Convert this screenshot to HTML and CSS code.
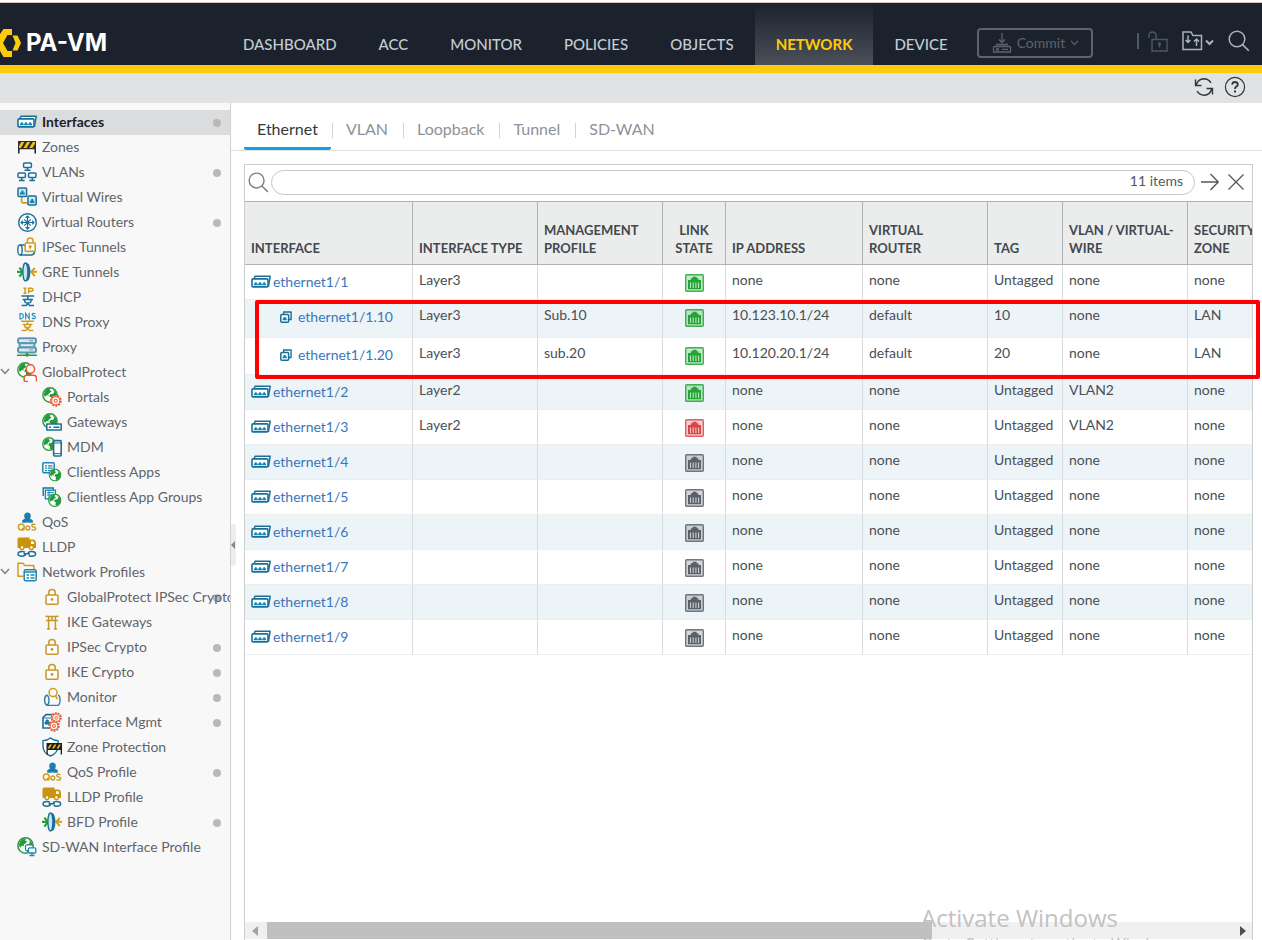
FILE: index.html
```html
<!DOCTYPE html>
<html lang="en">
<head>
<meta charset="utf-8">
<title>PA-VM</title>
<link rel="stylesheet" href="styles.css">
</head>
<body>
<svg class="sprite" aria-hidden="true">
  <symbol id="i-port" viewBox="0 0 20 20"><path d="M3 7.200L4 4.200h15.200l-1.800 10.600" fill="#fff" stroke="#1b6f96" stroke-width="1.500" stroke-linejoin="round"/><rect x="1" y="6.900" width="16" height="8" rx="1" fill="#fff" stroke="#1b6f96" stroke-width="1.600"/><path d="M2.900 13.300v-1.800h1v-1.300h1.800v1.300h1v1.800zM7.100 13.300v-1.800h1v-1.300h1.800v1.300h1v1.800zM11.300 13.300v-1.800h1v-1.300h1.800v1.300h1v1.800z" fill="#0a84b8"/></symbol>
  <symbol id="i-zone" viewBox="0 0 20 20"><path d="M1 4h18v12.5h-1.6v-4.3H2.6v4.3H1z" fill="#2b2b2b"/><path d="M4.200 5h3.200L4 11H2V8.800zM10 5h3.200L9.600 11H6.400zM15.800 5H18v1.800L15.400 11h-3.200z" fill="#f0be14"/></symbol>
  <symbol id="i-vlan" viewBox="0 0 20 20"><g fill="#fff" stroke="#1b6f96" stroke-width="1.5"><rect x="6.600" y="1" width="7.800" height="4.400" rx="1"/><rect x="1" y="11" width="7.400" height="4.400" rx="1"/><rect x="11.600" y="11" width="7.400" height="4.400" rx="1"/><path d="M10.500 5.400v3M7.500 8.200h6M4.700 15.400v3M2 18.600h5.600M15.300 15.400v3M12.400 18.600H18"/></g></symbol>
  <symbol id="i-wire" viewBox="0 0 20 20"><path d="M4.600 10v4.400q0 1.400 1.600 1.400H11" fill="none" stroke="#d39c1e" stroke-width="1.7"/><rect x="1" y="1" width="8.600" height="8.600" rx="1" fill="#cfe6f0" stroke="#1b6f96" stroke-width="1.5"/><rect x="11" y="9" width="8.200" height="9" rx="1" fill="#cfe6f0" stroke="#1b6f96" stroke-width="1.5"/><path d="M3 7.600V5.400h1.400V3.600h2v1.800h1.400v2.200zM13 16v-2.200h1.200V12h2v1.800h1.200V16z" fill="#0a84b8"/></symbol>
  <symbol id="i-router" viewBox="0 0 20 20"><circle cx="10.500" cy="10.500" r="8.800" fill="#fff" stroke="#1b6f96" stroke-width="1.4"/><g stroke="#1b6f96" stroke-width="1.200" fill="none"><path d="M10.500 4v13M4 10.500h13M8.600 5.800l1.900-1.800 1.900 1.800M8.600 15.200l1.900 1.800 1.900-1.800M5.800 8.600L4 10.500l1.800 1.900M15.200 8.600l1.800 1.900-1.800 1.900M7.200 7.400l6.600 6.200M13.800 7.400l-6.600 6.200"/></g></symbol>
  <symbol id="i-ipsec" viewBox="0 0 20 20"><g fill="none" stroke="#1b6f96" stroke-width="1.400"><ellipse cx="3" cy="13" rx="2.200" ry="5"/><path d="M3 8h6M3 18h11.400q2.600 0 3.200-3"/></g><rect x="8.200" y="6" width="10" height="8.400" rx="1" fill="#fff" stroke="#d39c1e" stroke-width="1.600"/><path d="M10.400 6V3.600q0-2.600 2.800-2.600T16 3.600V6" fill="none" stroke="#d39c1e" stroke-width="1.500"/><circle cx="13.200" cy="9.400" r="1.500" fill="#d39c1e"/><path d="M13.200 9.600v3" stroke="#d39c1e" stroke-width="1.200"/></symbol>
  <symbol id="i-gre" viewBox="0 0 20 20"><path d="M0 9.800h5.600M2.400 5.600L6 9.800l-3.600 4.800" fill="none" stroke="#23a03a" stroke-width="2.200"/><path d="M20 9.800h-5M17.800 5.800l-3.600 4 3.600 4.400" fill="none" stroke="#d39c1e" stroke-width="1.900"/><path d="M8.600 1h1.800q3 2 3 9t-3 9H8.600z" fill="#1b6f96"/><ellipse cx="8.400" cy="10" rx="2.500" ry="9" fill="#c8e3ef" stroke="#1b6f96" stroke-width="1.300"/></symbol>
  <symbol id="i-dhcp" viewBox="0 0 20 20"><path d="M8 .6v6M11.600 6.600V1.200h3q1.400.3 1.400 1.500t-1.500 1.500h-3M6.500 1.200h3M6.500 6.300h3" fill="none" stroke="#d39c1e" stroke-width="1.500"/><path d="M4.400 9h12.800M10.800 9v3M5.600 12.500h10.400M7.600 13q-.4 3 3.200 3t3.200-3M4.600 18.600h4.400l1.800-2 1.800 2H17" fill="none" stroke="#1b6f96" stroke-width="1.500"/></symbol>
  <symbol id="i-dns" viewBox="0 0 20 20"><path d="M3 1.600v5.200h1.400q2-.4 2-2.600t-2-2.600zM8.600 7.400v-6l3.600 5.400v-6M18.400 2q-3-1.400-3.200.4 0 1.200 1.600 1.500 1.800.4 1.600 1.700-.6 1.800-3.600.5" fill="none" stroke="#2a93bf" stroke-width="1.200"/><path d="M4 9.200h13M10.500 9.200v3M5.600 12.400h9.800M7.600 13q-.2 2.800 2.900 2.800t2.900-2.800M4.600 18.600h4l1.900-2 1.900 2h4" fill="none" stroke="#d39c1e" stroke-width="1.500"/></symbol>
  <symbol id="i-proxy" viewBox="0 0 20 20"><g fill="#dceaf0" stroke="#5d97b3" stroke-width="2"><rect x="1" y="1.200" width="18" height="5" rx="2"/><rect x="2.600" y="6.200" width="14.800" height="4.200"/><rect x="1" y="10.400" width="18" height="5" rx="2"/></g><path d="M12 3.700h4M12 12.900h4" stroke="#7db594" stroke-width="1.200"/><path d="M0 18.300h20M10 15.600v3" stroke="#23a03a" stroke-width="1.400"/><circle cx="10" cy="18" r="1.800" fill="#23a03a"/></symbol>
  <symbol id="i-globe" viewBox="0 0 16 16"><circle cx="8" cy="8" r="7.200" fill="#fff" stroke="#249a3a" stroke-width="1.400"/><path d="M3 4q2-3 5.500-2.600l-.8 2.200 2 .4-1.600 1.800-1.800 1.200.4 1.800-2-.8L3 10 1.600 7.500zM10.500 2l3 2.400L15 8l-1.500 4.200-3 2.300-1.700-1 .4-3-2-1 1-2.300 3-.5 1-2z" fill="#249a3a"/></symbol>
  <symbol id="i-gp" viewBox="0 0 20 20"><use href="#i-globe" x="0" y="0" width="16" height="16"/><circle cx="13.400" cy="7" r="4.200" fill="#f7f7f7" stroke="#ea5b33" stroke-width="1.500"/><path d="M7.200 19.600v-4q0-2.400 2.600-2.400h6.800q2.800 0 2.800 2.600v3.800M7 19.400h4" fill="#fff" stroke="#ea5b33" stroke-width="1.500"/></symbol>
  <symbol id="i-gear" viewBox="0 0 12 12"><circle cx="6" cy="6" r="4.900" fill="#fff" stroke="#ea5b33" stroke-width="1.800" stroke-dasharray="2 1"/><circle cx="6" cy="6" r="3.900" fill="#fff" stroke="#ea5b33"/><circle cx="6" cy="6" r="1.500" fill="none" stroke="#ea5b33"/></symbol>
  <symbol id="i-portal" viewBox="0 0 20 20"><use href="#i-globe" x="0" y="0" width="16" height="16"/><use href="#i-gear" x="7.500" y="7.500" width="12.500" height="12.500"/></symbol>
  <symbol id="i-gateway" viewBox="0 0 20 20"><use href="#i-globe" x="0" y="1" width="16" height="16"/><path d="M4.800 12h14.400v6H4.800z" fill="#fff" stroke="#1b6f96" stroke-width="1.500" stroke-linejoin="round"/><path d="M7 15.200h2M11.500 15.200h6" stroke="#1b6f96" stroke-width="1.400"/></symbol>
  <symbol id="i-mdm" viewBox="0 0 20 20"><use href="#i-globe" x="0" y="0" width="14" height="14"/><rect x="11.600" y="3.600" width="7.600" height="15.400" rx="1.200" fill="#fff" stroke="#1b6f96" stroke-width="1.600"/><path d="M12 6h7M12 16.600h7" stroke="#1b6f96"/></symbol>
  <symbol id="i-app" viewBox="0 0 20 20"><rect x=".8" y=".8" width="11.400" height="10" rx="1" fill="#fff" stroke="#1f86b3" stroke-width="1.500"/><path d="M3 3.800h2M6 3.800h4.500M3 6.200h2M6 6.200h4.500M3 8.600h2M6 8.600h4.500" stroke="#1f86b3" stroke-width="1.200"/><use href="#i-globe" x="6.500" y="6.500" width="13" height="13"/></symbol>
  <symbol id="i-apps" viewBox="0 0 20 20"><path d="M1.200 9V1h10v3" fill="#fff" stroke="#1b6f96" stroke-width="1.400"/><rect x="3.400" y="3.200" width="10" height="8.600" fill="#fff" stroke="#1f86b3" stroke-width="1.400"/><path d="M5 5.600h7M5 8h7M7 3v8" stroke="#1f86b3"/><use href="#i-globe" x="6" y="6.500" width="13.500" height="13.500"/></symbol>
  <symbol id="i-qos" viewBox="0 0 20 20"><path d="M7.200 4q0-3.600 3.300-3.600T13.800 4q0 1.600-.8 2.600l2.800 1.600v2.600h-4V9.200h-2.600v1.600h-4V8.200L8 6.600Q7.200 5.600 7.200 4z" fill="#1a7fb2"/><path d="M10.500 7l1.600 3.600H8.900z" fill="#1b6f96"/><g fill="none" stroke="#d39c1e" stroke-width="1.500"><ellipse cx="4.300" cy="15" rx="2.900" ry="3"/><path d="M5 16l2.200 2.600"/><circle cx="10.800" cy="16" r="1.900"/><path d="M18.600 12.600q-3.600-1.200-3.800.8 0 1.200 1.800 1.700 2.200.5 2 1.800-.6 1.800-4.200.7"/></g></symbol>
  <symbol id="i-lldp" viewBox="0 0 20 20"><path d="M.5 2Q.5.500 2 .500h10.500V2.500h4q2 .2 2.500 3v5.500H.5z" fill="#c9920f"/><path d="M14 4.200h2.300l1 2.800H14z" fill="#fff"/><g fill="#fff" stroke="#c9920f" stroke-width="1.300"><circle cx="5" cy="10.500" r="2"/><circle cx="14.400" cy="10.500" r="2"/></g><path d="M8 15.400q-1-1-3-1-4 0-4 2.400t4 2.400q3 0 3.600-1.600M11.600 18.200q1 1 3 1 4 0 4-2.400t-4-2.400q-3 0-3.600 1.600M6.500 16.800h6.500" fill="none" stroke="#1b6f96" stroke-width="1.500"/></symbol>
  <symbol id="i-netprof" viewBox="0 0 20 20"><path d="M6.500 14.300H1V1.200h5l1.800 2.300h9V7" fill="none" stroke="#d39c1e" stroke-width="1.500" stroke-linejoin="round"/><rect x="7.200" y="7.800" width="12" height="11" rx="1.500" fill="#fff" stroke="#1f86b3" stroke-width="1.500"/><path d="M7 10h12.500" stroke="#1f86b3" stroke-width="1.500"/><path d="M9.500 13h2.500M13.500 13h4M9.500 16h2.500M13.500 16h4" stroke="#1f86b3" stroke-width="1.300"/></symbol>
  <symbol id="i-lock" viewBox="0 0 20 20"><rect x="4" y="8" width="12" height="9.200" rx="1" fill="#fff" stroke="#c9962a" stroke-width="1.500"/><path d="M6.800 8V5.500Q6.800 2.600 10 2.600t3.200 2.900V8" fill="none" stroke="#c9962a" stroke-width="1.500"/><circle cx="10" cy="12.400" r="1.400" fill="#c9962a"/></symbol>
  <symbol id="i-ike" viewBox="0 0 20 20"><path d="M3.500 4.200q6.500.8 13 0M4 8.600h12M6.600 4.500V17M13.400 4.500V17M10 4.500v4M5 17h3M12 17h3" fill="none" stroke="#c9962a" stroke-width="1.500"/></symbol>
  <symbol id="i-monitor" viewBox="0 0 20 20"><g fill="none" stroke="#3481a3" stroke-width="1.400"><path d="M5 8q-2.400 1-2.400 5T5 18.400h11q2-1 2-5.400T16 8.200M5 8q2 1.400 2 5.400t-2 5"/></g><circle cx="11" cy="5.600" r="4" fill="#fff" stroke="#d39c1e" stroke-width="1.500"/><path d="M13.500 9l2 3" stroke="#d39c1e" stroke-width="1.500"/></symbol>
  <symbol id="i-mgmt" viewBox="0 0 20 20"><path d="M1 16V5.500L4 2.600h11V16z" fill="#fff" stroke="#1b6f96" stroke-width="1.600"/><path d="M1 6h11M3 12v-2h1.200V8h2v2h1.200v2z" fill="#0a84b8" stroke="#1b6f96"/><use href="#i-gear" x="8.500" y="0" width="11.500" height="11.500"/><use href="#i-gear" x="6" y="8" width="12" height="12"/></symbol>
  <symbol id="i-zprot" viewBox="0 0 20 20"><path d="M8.500 1q3 2.500 7.500 2.600V9q0 7-7.500 10Q1 16 1 9V3.600Q5.500 3.500 8.500 1z" fill="#fff" stroke="#1b6f96" stroke-width="1.400"/><path d="M4.500 6H20v11.500h-1.300V13H5.800v4.500H4.500z" fill="#1c1c1c"/><path d="M8 7.500h2L7.500 11.500h-2zM12.500 7.500h2L12 11.500h-2zM17 7.500h1.800L16.500 11.500h-2z" fill="#f0be14"/></symbol>
  <symbol id="i-sdwan" viewBox="0 0 20 20"><use href="#i-globe" x="0" y="0" width="17" height="17"/><rect x="8.500" y="8" width="7.500" height="5.500" rx="1" fill="#fff" stroke="#1f86b3" stroke-width="1.200"/><rect x="11.500" y="10.800" width="7.300" height="5.200" rx="1" fill="#fff" stroke="#1f86b3" stroke-width="1.300"/><path d="M15 16v2.500M12.500 18.500h5" stroke="#1f86b3" stroke-width="1.300"/></symbol>
  <symbol id="i-sub" viewBox="0 0 12 12"><path d="M3.600 3V1h7.500v7.500H9" fill="none" stroke="#1b6f96" stroke-width="1.400" stroke-linejoin="round"/><rect x=".8" y="3.400" width="7.800" height="7.800" rx="1" fill="#fff" stroke="#1b6f96" stroke-width="1.500"/><path d="M2.600 9.300V7.500h1V6h2.200v1.500h1v1.800z" fill="#0a84b8"/></symbol>
  <symbol id="i-link" viewBox="0 0 19 18"><rect x=".7" y=".7" width="17.600" height="16.600" rx="1" fill="currentColor" fill-opacity=".25" stroke="currentColor" stroke-opacity=".85" stroke-width="1.400"/><path d="M3 15.300V6h2.800V4.300h1.800V2.800h4v1.500h1.800V6H16v9.300z" fill="currentColor"/><path d="M5.500 8.500v5.500M8.200 8.500v5.500M10.900 8.500v5.500M13.600 8.500v5.500" stroke="#fff" stroke-opacity=".7" stroke-width="1.100"/></symbol>
  <symbol id="i-search" viewBox="0 0 22 22"><circle cx="9" cy="9" r="7.800" fill="none" stroke="currentColor" stroke-width="1.500"/><path d="M14.600 14.600l6.200 6.200" stroke="currentColor" stroke-width="1.600"/></symbol>
  <symbol id="i-chev" viewBox="0 0 10 7"><path d="M1 1l4 4.500L9 1" fill="none" stroke="currentColor" stroke-width="1.400"/></symbol>
</svg>

<header class="top">
  <div class="brand">
    <svg class="brand-mark" viewBox="0 0 21 28" aria-hidden="true"><path d="M0 5L3.500 0H12v6H7.500L3 14l4.500 8H12v6H3.500L0 22z" fill="#fecb0a"/><path d="M12.500 6.500h5L21 14l-3.500 7.500h-5l3-7.500z" fill="#fecb0a"/></svg>
    <span>PA-VM</span>
  </div>
  <nav class="menu" aria-label="Main">
    <a href="#">DASHBOARD</a><a href="#">ACC</a><a href="#">MONITOR</a><a href="#">POLICIES</a><a href="#">OBJECTS</a><a href="#" class="current">NETWORK</a><a href="#">DEVICE</a>
  </nav>
  <button class="commit" type="button" disabled>
    <svg width="20" height="21" viewBox="0 0 20 21" fill="none" stroke="currentColor" stroke-width="1.300" aria-hidden="true"><path d="M10 0v9M7 6.500L10 9.500l3-3M1.500 14.500q0-1 1-1h15q1 0 1 1V19H1.500zM4 11.500h12M10 16.300h6"/><circle cx="5.500" cy="16.300" r="1"/></svg>
    <span>Commit</span>
    <svg width="9" height="6" aria-hidden="true"><use href="#i-chev"/></svg>
  </button>
  <div class="tools">
    <span class="bar"></span>
    <button type="button" class="lock" aria-label="Locks"><svg width="20" height="21" viewBox="0 0 20 21" fill="none" stroke="currentColor" stroke-width="1.400"><path d="M4 8.500h15V20H4zM1 7V4q.5-3 3.500-3T8 4v4.500"/><circle cx="11.500" cy="13" r="1" fill="currentColor"/><path d="M11.500 13v3.500"/></svg></button>
    <button type="button" aria-label="Configuration"><svg width="32" height="20" viewBox="0 0 32 20" fill="none" stroke="currentColor" stroke-width="1.500"><path d="M1 18.500V1h8l2 3.500h8.500v14zM6 4.500v7M3.600 9L6 11.500 8.400 9M14.500 15V8M12 10.500L14.500 8l2.500 2.500"/><path d="M24 9.500l3.500 3.500 3.500-3.500" stroke-width="2"/></svg></button>
    <button type="button" aria-label="Search"><svg width="22" height="22"><use href="#i-search"/></svg></button>
  </div>
</header>

<div class="subbar">
  <button type="button" aria-label="Refresh"><svg width="20" height="20" viewBox="0 0 20 20" fill="none" stroke="currentColor" stroke-width="1.400"><path d="M2.200 8.500Q3.500 2 10 1.800q4.500.2 7 4M1.500 2.500v6h6M17.800 11Q16.500 18 10 18.200q-4.500-.2-7-4M18.500 17.500v-6h-6"/></svg></button>
  <button type="button" aria-label="Help"><svg width="22" height="22" viewBox="0 0 22 22" fill="none" stroke="currentColor"><circle cx="11" cy="11" r="9.600" stroke-width="1.200"/><path d="M8.200 8.600Q8.400 6 11 6t2.800 2.400q0 1.400-1.500 2.200Q11 11.400 11 13" stroke-width="1.800"/><path d="M11 14.500v2" stroke-width="2"/></svg></button>
</div>

<div class="layout">
  <nav class="side" aria-label="Network">
    <ul>
      <li class="on dot"><svg><use href="#i-port"/></svg><a href="#">Interfaces</a></li>
      <li><svg><use href="#i-zone"/></svg><a href="#">Zones</a></li>
      <li class="dot"><svg><use href="#i-vlan"/></svg><a href="#">VLANs</a></li>
      <li><svg><use href="#i-wire"/></svg><a href="#">Virtual Wires</a></li>
      <li class="dot"><svg><use href="#i-router"/></svg><a href="#">Virtual Routers</a></li>
      <li><svg><use href="#i-ipsec"/></svg><a href="#">IPSec Tunnels</a></li>
      <li><svg><use href="#i-gre"/></svg><a href="#">GRE Tunnels</a></li>
      <li><svg><use href="#i-dhcp"/></svg><a href="#">DHCP</a></li>
      <li><svg><use href="#i-dns"/></svg><a href="#">DNS Proxy</a></li>
      <li><svg><use href="#i-proxy"/></svg><a href="#">Proxy</a></li>
      <li class="parent"><button type="button" aria-label="Collapse GlobalProtect"><svg class="chev"><use href="#i-chev"/></svg></button><svg><use href="#i-gp"/></svg><a href="#">GlobalProtect</a></li>
      <li class="child"><svg><use href="#i-portal"/></svg><a href="#">Portals</a></li>
      <li class="child"><svg><use href="#i-gateway"/></svg><a href="#">Gateways</a></li>
      <li class="child"><svg><use href="#i-mdm"/></svg><a href="#">MDM</a></li>
      <li class="child"><svg><use href="#i-app"/></svg><a href="#">Clientless Apps</a></li>
      <li class="child"><svg><use href="#i-apps"/></svg><a href="#">Clientless App Groups</a></li>
      <li><svg><use href="#i-qos"/></svg><a href="#">QoS</a></li>
      <li><svg><use href="#i-lldp"/></svg><a href="#">LLDP</a></li>
      <li class="parent"><button type="button" aria-label="Collapse Network Profiles"><svg class="chev"><use href="#i-chev"/></svg></button><svg><use href="#i-netprof"/></svg><a href="#">Network Profiles</a></li>
      <li class="child dot"><svg><use href="#i-lock"/></svg><a href="#">GlobalProtect IPSec Crypto</a></li>
      <li class="child"><svg><use href="#i-ike"/></svg><a href="#">IKE Gateways</a></li>
      <li class="child dot"><svg><use href="#i-lock"/></svg><a href="#">IPSec Crypto</a></li>
      <li class="child dot"><svg><use href="#i-lock"/></svg><a href="#">IKE Crypto</a></li>
      <li class="child dot"><svg><use href="#i-monitor"/></svg><a href="#">Monitor</a></li>
      <li class="child dot"><svg><use href="#i-mgmt"/></svg><a href="#">Interface Mgmt</a></li>
      <li class="child"><svg><use href="#i-zprot"/></svg><a href="#">Zone Protection</a></li>
      <li class="child dot"><svg><use href="#i-qos"/></svg><a href="#">QoS Profile</a></li>
      <li class="child"><svg><use href="#i-lldp"/></svg><a href="#">LLDP Profile</a></li>
      <li class="child dot"><svg><use href="#i-gre"/></svg><a href="#">BFD Profile</a></li>
      <li><svg><use href="#i-sdwan"/></svg><a href="#">SD-WAN Interface Profile</a></li>
    </ul>
  </nav>

  <main class="main">
    <button class="collapse" type="button" aria-label="Collapse sidebar"></button>
    <nav class="tabs" aria-label="Interface kinds">
      <a href="#" class="active">Ethernet</a><a href="#">VLAN</a><a href="#">Loopback</a><a href="#">Tunnel</a><a href="#">SD-WAN</a>
    </nav>

    <div class="panel">
      <form class="filter">
        <svg class="glass" aria-hidden="true"><use href="#i-search"/></svg>
        <div class="field"><input type="text" aria-label="Filter interfaces"><span>11 items</span></div>
        <button type="button" aria-label="Apply filter"><svg width="18" height="18" viewBox="0 0 18 18" fill="none" stroke="currentColor" stroke-width="1.400"><path d="M0 9h17M9.500 1l7.700 8-7.700 8"/></svg></button>
        <button type="button" aria-label="Clear filter"><svg width="16" height="16" viewBox="0 0 16 16" stroke="currentColor" stroke-width="1.300"><path d="M.5.500l15 15M15.500.500l-15 15"/></svg></button>
      </form>
      <div class="scroll">
        <table>
          <colgroup><col class="c-if"><col class="c-md"><col class="c-md"><col class="c-ln"><col class="c-ip"><col class="c-md"><col class="c-tg"><col class="c-md"><col class="c-md"></colgroup>
          <thead><tr><th>INTERFACE</th><th>INTERFACE TYPE</th><th>MANAGEMENT<br>PROFILE</th><th class="mid">LINK<br>STATE</th><th>IP ADDRESS</th><th>VIRTUAL<br>ROUTER</th><th>TAG</th><th>VLAN / VIRTUAL-<br>WIRE</th><th>SECURITY<br>ZONE</th></tr></thead>
          <tbody>
            <tr><td class="if"><a href="#"><svg><use href="#i-port"/></svg>ethernet1/1</a></td><td>Layer3</td><td></td><td class="link up"><svg><use href="#i-link"/></svg></td><td>none</td><td>none</td><td>Untagged</td><td>none</td><td>none</td></tr>
            <tr class="sub"><td class="if"><a href="#"><svg><use href="#i-sub"/></svg>ethernet1/1.10</a></td><td>Layer3</td><td>Sub.10</td><td class="link up"><svg><use href="#i-link"/></svg></td><td>10.123.10.1/24</td><td>default</td><td>10</td><td>none</td><td>LAN</td></tr>
            <tr class="sub last"><td class="if"><a href="#"><svg><use href="#i-sub"/></svg>ethernet1/1.20</a></td><td>Layer3</td><td>sub.20</td><td class="link up"><svg><use href="#i-link"/></svg></td><td>10.120.20.1/24</td><td>default</td><td>20</td><td>none</td><td>LAN</td></tr>
            <tr><td class="if"><a href="#"><svg><use href="#i-port"/></svg>ethernet1/2</a></td><td>Layer2</td><td></td><td class="link up"><svg><use href="#i-link"/></svg></td><td>none</td><td>none</td><td>Untagged</td><td>VLAN2</td><td>none</td></tr>
            <tr><td class="if"><a href="#"><svg><use href="#i-port"/></svg>ethernet1/3</a></td><td>Layer2</td><td></td><td class="link down"><svg><use href="#i-link"/></svg></td><td>none</td><td>none</td><td>Untagged</td><td>VLAN2</td><td>none</td></tr>
            <tr><td class="if"><a href="#"><svg><use href="#i-port"/></svg>ethernet1/4</a></td><td></td><td></td><td class="link"><svg><use href="#i-link"/></svg></td><td>none</td><td>none</td><td>Untagged</td><td>none</td><td>none</td></tr>
            <tr><td class="if"><a href="#"><svg><use href="#i-port"/></svg>ethernet1/5</a></td><td></td><td></td><td class="link"><svg><use href="#i-link"/></svg></td><td>none</td><td>none</td><td>Untagged</td><td>none</td><td>none</td></tr>
            <tr><td class="if"><a href="#"><svg><use href="#i-port"/></svg>ethernet1/6</a></td><td></td><td></td><td class="link"><svg><use href="#i-link"/></svg></td><td>none</td><td>none</td><td>Untagged</td><td>none</td><td>none</td></tr>
            <tr><td class="if"><a href="#"><svg><use href="#i-port"/></svg>ethernet1/7</a></td><td></td><td></td><td class="link"><svg><use href="#i-link"/></svg></td><td>none</td><td>none</td><td>Untagged</td><td>none</td><td>none</td></tr>
            <tr><td class="if"><a href="#"><svg><use href="#i-port"/></svg>ethernet1/8</a></td><td></td><td></td><td class="link"><svg><use href="#i-link"/></svg></td><td>none</td><td>none</td><td>Untagged</td><td>none</td><td>none</td></tr>
            <tr><td class="if"><a href="#"><svg><use href="#i-port"/></svg>ethernet1/9</a></td><td></td><td></td><td class="link"><svg><use href="#i-link"/></svg></td><td>none</td><td>none</td><td>Untagged</td><td>none</td><td>none</td></tr>
          </tbody>
        </table>
      </div>
      <div class="hbar" aria-hidden="true">
        <svg viewBox="0 0 6 10"><path d="M6 0v10L0 5z" fill="#a3a3a3"/></svg>
        <div class="track"><div class="thumb"></div></div>
        <svg viewBox="0 0 6 10"><path d="M0 0v10l6-5z" fill="#505050"/></svg>
      </div>
      <div class="mark" aria-hidden="true"></div>
    </div>
  </main>
</div>
<div class="watermark"><strong>Activate Windows</strong><span>Go to Settings to activate Windows.</span></div>
</body>
</html>
```

FILE: styles.css
```css
* { box-sizing: border-box; }
body {
  margin: 0;
  height: 100vh;
  display: flex;
  flex-direction: column;
  overflow: hidden;
  position: relative;
  background: #fff;
  color: #4a4f54;
  font: 14px/18px Lato, "Open Sans", sans-serif;
}
a { color: inherit; text-decoration: none; }
button { border: 0; background: none; padding: 0; color: inherit; font: inherit; display: flex; align-items: center; }
svg { flex: none; display: block; }
.sprite { position: absolute; width: 0; height: 0; }

.top {
  margin-top: 3px;
  flex: none;
  height: 70px;
  display: flex;
  background: #1b222e;
  border-bottom: 8px solid #fecb0a;
  box-shadow: 0 -1px 0 #e3c4bd;
}
.brand { width: 222px; display: flex; align-items: center; gap: 5px; padding-top: 18px; color: #fff; font: 700 24px/28px Inter, sans-serif; }
.brand-mark { width: 21px; height: 28px; }
.menu { display: flex; font-size: 15px; color: #c3cdd3; }
.menu a { padding: 32px 21px 0; font-weight: 500; }
.menu .current { color: #fecb0a; font-weight: 700; background: linear-gradient(#1b222e, #4a4f58); }
.commit { align-self: flex-start; margin: 25px 0 0 8px; width: 116px; height: 30px; border: 2px solid #5c636d; border-radius: 4px; gap: 5px; padding-left: 13px; color: #5c636d; }
.tools { margin-left: auto; padding: 14px 12px 0 0; display: flex; align-items: center; gap: 14px; color: #a9b2ba; }
.tools .bar { width: 2px; height: 16px; background: #4c5864; margin-right: -5px; }
.tools .lock { color: #4c5864; }

.subbar { flex: none; height: 30px; background: #e1e2e4; display: flex; align-items: center; justify-content: flex-end; gap: 10px; padding: 0 16px 2px 0; color: #33373b; }

.layout { flex: 1; min-height: 0; display: flex; }
.side { width: 231px; flex: none; background: #f8f8f8; border-right: 1px solid #cfd1d3; overflow: hidden; padding-top: 7px; color: #5f656b; }
.side ul { list-style: none; margin: 0; padding: 0; }
.side li { position: relative; height: 25px; display: flex; align-items: center; gap: 5px; padding: 0 0 2px 17px; white-space: nowrap; }
.side li.parent { padding-left: 0; }
.side li.parent button { width: 12px; overflow: hidden; color: #777c81; }
.side li.child { padding-left: 42px; }
.side li a { position: relative; z-index: 1; }
.side svg { width: 20px; height: 20px; }
.side .chev { width: 10px; height: 7px; }
.side .dot::after { content: ""; position: absolute; right: 9px; top: 9px; width: 8px; height: 8px; border-radius: 4px; background: #b9b9b9; }
.side .on { background: #dbdcdd; color: #1d2126; font-weight: 700; }

.main { flex: 1; min-width: 0; position: relative; display: flex; flex-direction: column; }
.collapse { position: absolute; left: 0; top: 421px; width: 5px; height: 42px; background: #ededed; border-radius: 0 3px 3px 0; }
.collapse::before { content: ""; border: 4px solid transparent; border-right-color: #888; border-left: 0; }
.tabs { display: flex; height: 48px; align-items: stretch; padding-left: 13px; border-bottom: 1px solid #e0e1e2; font-size: 16px; color: #8e9297; }
.tabs a { position: relative; padding: 17px 14px 0 15px; }
.tabs a + a::before { content: ""; position: absolute; left: 1px; top: 20px; width: 1px; height: 15px; background: #cfd3d6; }
.tabs .active { padding: 17px 13px 0; color: #33383d; border-bottom: 3px solid #0fa1e6; border-radius: 2px; }

.panel { flex: 1; min-height: 0; position: relative; margin: 13px 9px 0 13px; border: 1px solid #cbcdce; border-bottom: 0; display: flex; flex-direction: column; }
.filter { flex: none; height: 36px; display: flex; align-items: center; padding: 0 8px 2px 3px; color: #55595e; }
.glass { width: 21px; height: 21px; margin-right: 2px; color: #7d8287; }
.field { flex: 1; height: 25px; display: flex; align-items: center; border: 1px solid #c6c9cb; border-radius: 13px; padding: 0 11px 2px; }
.field input { flex: 1; min-width: 0; border: 0; outline: 0; background: none; font: inherit; }
.filter button { margin-left: 6px; }
.filter button + button { margin-left: 9px; }

.scroll { flex: 1; min-height: 0; overflow: hidden; }
table { border-collapse: separate; border-spacing: 0; table-layout: fixed; width: 1068px; }
.c-if { width: 168px; }
.c-md { width: 125px; }
.c-ln { width: 63px; }
.c-ip { width: 137px; }
.c-tg { width: 75px; }
th { height: 64px; padding: 0 6px 7px; vertical-align: bottom; text-align: left; background: #ebeded; border: solid #b0b3b5; border-width: 1px 1px 1px 0; color: #43484d; font-size: 13px; line-height: 18px; font-weight: 700; white-space: nowrap; }
th.mid { text-align: center; }
td { height: 35px; padding: 6px 6px 0; vertical-align: top; border-right: 1px solid #d9dbdc; border-bottom: 1px solid #eceeee; white-space: nowrap; }
tbody tr:nth-child(even) td { background: #edf4f7; }
.sub td { height: 38px; }
.sub.last td { height: 37px; }
td.if { padding-top: 8px; color: #3a76bd; }
.if a { display: flex; align-items: center; gap: 2px; height: 18px; }
.if svg { width: 20px; height: 20px; }
.sub .if a { padding-left: 29px; gap: 6px; }
.sub .if svg { width: 12px; height: 12px; }
td.link { padding-top: 9px; color: #5a6068; }
.link svg { width: 19px; height: 18px; margin: 0 auto; }
td.up { color: #22a532; }
td.down { color: #dc4545; }

.hbar { flex: none; height: 17px; display: flex; align-items: center; background: #f0f0f0; padding: 0 6px 0 7px; gap: 9px; margin-bottom: 1px; }
.hbar svg { width: 6px; height: 10px; }
.track { flex: 1; height: 100%; }
.thumb { width: 69%; height: 100%; background: #c0c0c0; }
.mark { position: absolute; top: 135px; left: 10px; right: -8px; height: 79px; border: 4px solid #f00; border-radius: 2px; }

.watermark { position: absolute; left: 921px; top: 902px; color: #c2c2c2; font-family: "Open Sans", sans-serif; white-space: nowrap; pointer-events: none; }
.watermark strong { display: block; font-size: 24px; line-height: 32px; font-weight: 400; }
.watermark span { font-size: 16px; line-height: 20px; }
```
